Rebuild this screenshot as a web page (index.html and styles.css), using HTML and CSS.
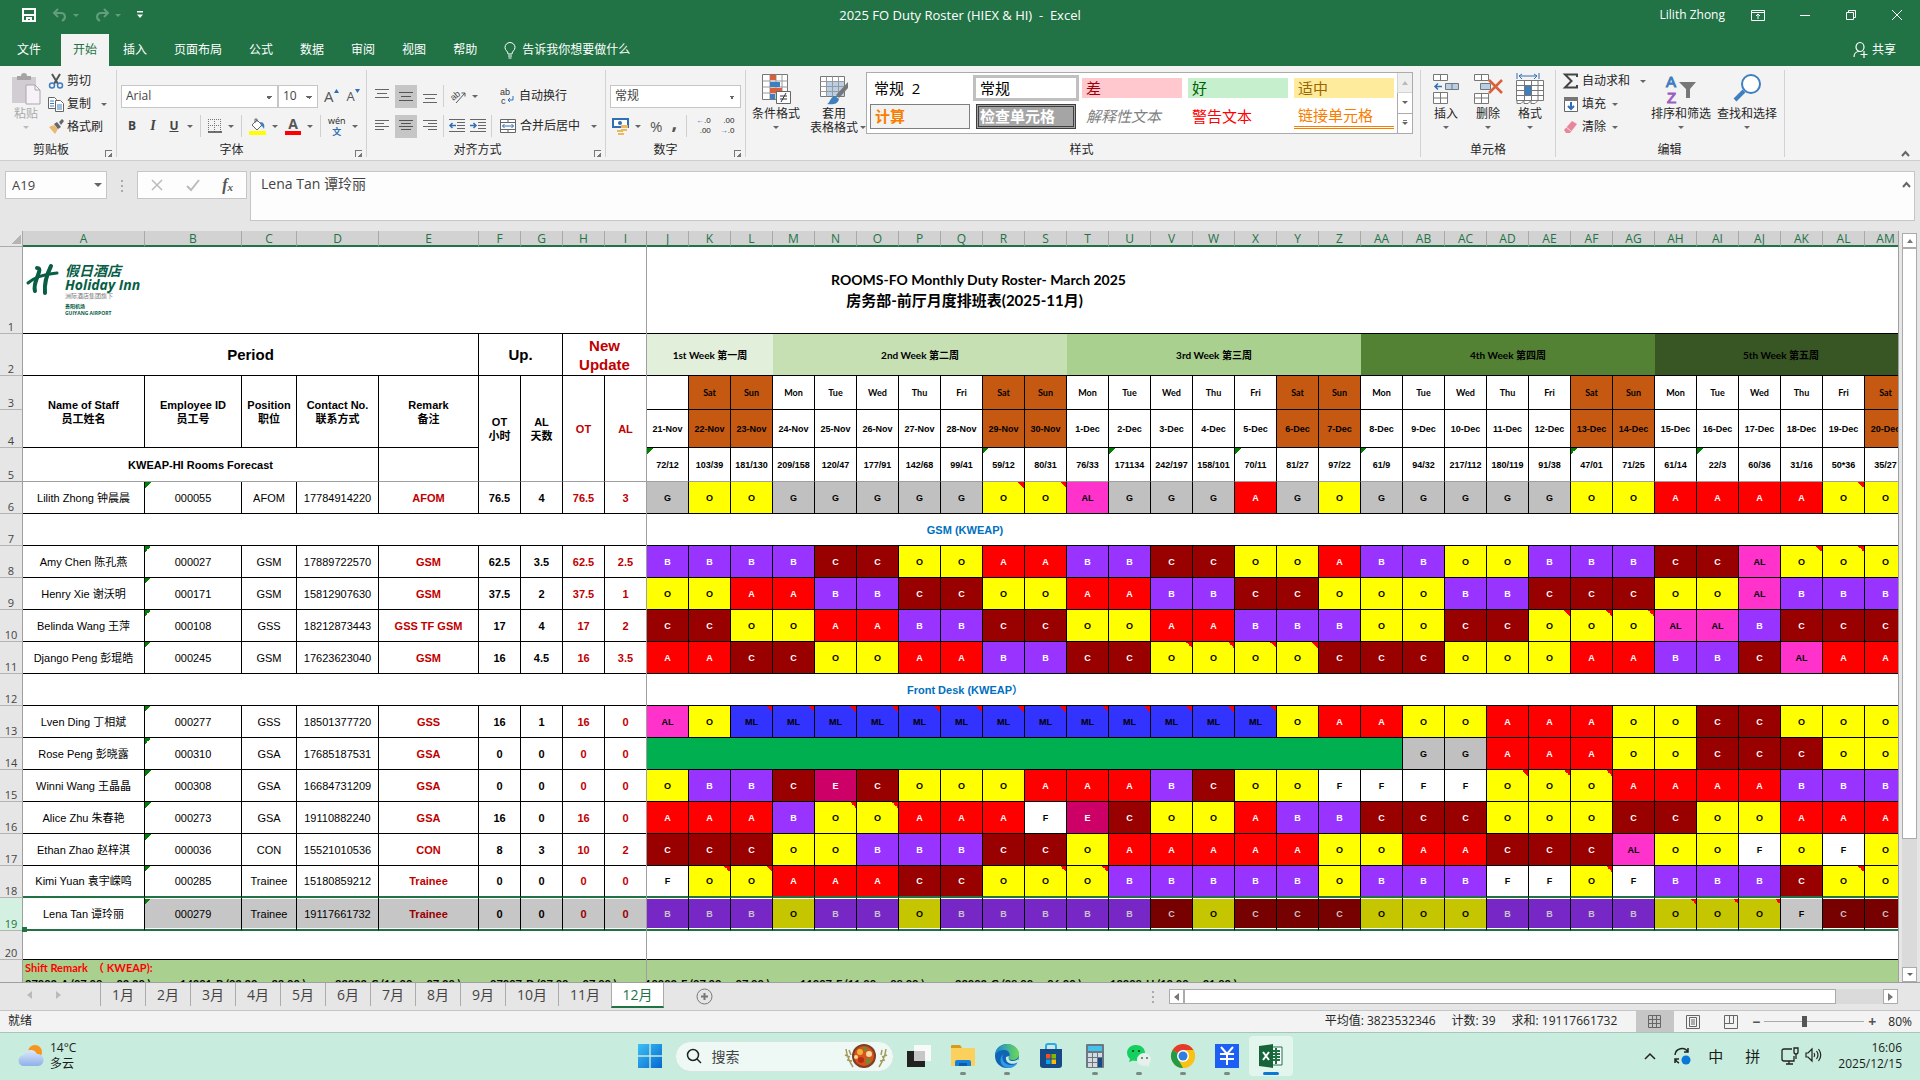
FILE: index.html
```html
<!DOCTYPE html>
<html lang="zh-CN">
    <head>
        <meta charset="utf-8">
        <title>2025 FO Duty Roster (HIEX &amp; HI) - Excel</title>
        <link rel="stylesheet" href="styles.css">
    </head>
    <body>
        <header class="titleBar">
            <div class="quick">
                <button aria-label="保存"><svg width="16" height="16" viewBox="0 0 16 16" fill="none" stroke="#fff" stroke-width="2"><path d="M2 2h12v12H2z"/><path d="M2 8h12M6 14v-3h4v3"/></svg></button>
                <button class="dim" aria-label="撤消"><svg width="16" height="16" viewBox="0 0 16 16" fill="none" stroke="#fff" stroke-width="2"><path d="M6 2L2 6l4 4M2 6h7c4 0 6 5 1 8"/></svg><i class="arrow"></i></button>
                <button class="dim" aria-label="恢复"><svg width="16" height="16" viewBox="0 0 16 16" fill="none" stroke="#fff" stroke-width="2"><path d="M10 2l4 4-4 4M14 6H7c-4 0-6 5-1 8"/></svg><i class="arrow"></i></button>
                <button aria-label="自定义"><svg width="8" height="8" viewBox="0 0 8 8"><path d="M1 0h6v1.500H1zM1 3.500h6L4 7z" fill="#fff"/></svg></button>
            </div>
            <h1>2025 FO Duty Roster (HIEX &amp; HI)&nbsp; -&nbsp; Excel</h1>
            <div class="winCtl">
                <span>Lilith Zhong</span>
                <button aria-label="功能区显示选项"><svg width="14" height="14" viewBox="0 0 14 14" fill="none" stroke="#fff"><path d="M.5 2.500h13v10H.5zM.5 4.500h13M7 11V6M5 8l2-2 2 2"/></svg></button>
                <button aria-label="最小化"><svg width="12" height="12" viewBox="0 0 12 12" stroke="#fff"><path d="M1 6.500h10"/></svg></button>
                <button aria-label="还原"><svg width="12" height="12" viewBox="0 0 12 12" fill="none" stroke="#fff"><path d="M1.500 3.500h7v7h-7zM3.500 3.500v-2h7v7h-2"/></svg></button>
                <button aria-label="关闭"><svg width="12" height="12" viewBox="0 0 12 12" stroke="#fff"><path d="M1 1l10 10M11 1L1 11"/></svg></button>
            </div>
        </header>
        <nav class="tabs">
            <button>文件</button>
            <button class="on">开始</button>
            <button>插入</button>
            <button>页面布局</button>
            <button>公式</button>
            <button>数据</button>
            <button>审阅</button>
            <button>视图</button>
            <button>帮助</button>
            <button class="tell"><svg width="12" height="17" viewBox="0 0 12 17" fill="none" stroke="#fff"><path d="M4 12c0-3-3-3.500-3-6.500a5 5 0 0 1 10 0C11 8.500 8 9 8 12zM4 14h4M4.500 16h3"/></svg>告诉我你想要做什么</button>
            <button class="share"><svg width="15" height="16" viewBox="0 0 15 16" fill="none" stroke="#fff" stroke-width="1.200"><ellipse cx="7" cy="5" rx="4" ry="4.500"/><path d="M1 15c0-3 2-5.500 5-5.500M11 9v7M7.500 12.500h7"/></svg>共享</button>
        </nav>

        <section class="ribbon">
            <div class="group gClip">
                <div class="tools">
                    <button class="big dimText"><svg width="30" height="32" viewBox="0 0 30 32"><path d="M1 4h24v26H1z" fill="#d2cdd2"/><path d="M6 7V3h4a3 3 0 0 1 6 0h4v4z" fill="#a6a2a6"/><path d="M15 12h9l5 5v14H15z" fill="#f6f2f8" stroke="#aaa6ac"/><path d="M24 12v5h5" fill="none" stroke="#aaa6ac"/></svg><span>粘贴</span><i class="arrow"></i></button>
                    <div class="stack">
                        <button><svg width="16" height="16" viewBox="0 0 16 16" fill="none"><path d="M4 1l6 10M12 1L6 11" stroke="#555" stroke-width="2"/><circle cx="4" cy="12.500" r="2.500" stroke="#3f7fbf" stroke-width="1.500"/><circle cx="12" cy="12.500" r="2.500" stroke="#3f7fbf" stroke-width="1.500"/></svg>剪切</button>
                        <button><svg width="16" height="16" viewBox="0 0 16 16" fill="#fff" stroke="#666"><path d="M.5 1.500h6l2 2v9h-8z"/><path d="M7.500 4.500h5l3 3v8h-8z"/><path d="M2 5h4M2 7.500h4M2 10h4M9 9h5M9 11h5M9 13h5" stroke="#3f7fbf"/></svg>复制<i class="arrow far"></i></button>
                        <button><svg width="16" height="16" viewBox="0 0 16 16"><path d="M1 8l5-2 4 4-3 5z" fill="#e9b872"/><path d="M6 5l3-2 4 5-3 2zM11 3l3-3 2 2-3 4z" fill="#666"/></svg>格式刷</button>
                    </div>
                </div>
                <h2>剪贴板</h2><i class="launch"></i>
            </div>
            <div class="group gFont">
                <div class="tools rows">
                    <div class="row">
                        <div class="joined"><select class="fontName" aria-label="字体"><option>Arial</option></select><select class="fontSize" aria-label="字号"><option>10</option></select></div>
                        <button class="grow" aria-label="增大字号">A<svg width="5" height="4" viewBox="0 0 5 4"><path d="M0 4l2.500-4L5 4z" fill="#2f6fb5"/></svg></button>
                        <button class="grow small" aria-label="减小字号">A<svg width="5" height="4" viewBox="0 0 5 4"><path d="M0 0h5L2.500 4z" fill="#2f6fb5"/></svg></button>
                    </div>
                    <div class="row fontRow">
                        <button class="bold">B</button><button class="italic">I</button><button class="under">U</button><i class="arrow"></i><i class="sep"></i>
                        <button aria-label="边框"><svg width="14" height="14" viewBox="0 0 14 14" fill="none" stroke="#777"><path d="M.5 0v13M6.500 0v13M12.500 0v13M0 .5h13M0 6.500h13" stroke-dasharray="1 1"/><path d="M0 13h14" stroke="#444" stroke-width="1.500"/></svg></button><i class="arrow"></i><i class="sep"></i>
                        <button aria-label="填充颜色"><svg width="17" height="17" viewBox="0 0 17 17"><path d="M3 7l5-5 5 5-5 5z" fill="#fff" stroke="#666"/><path d="M6 5V1h2v3" fill="none" stroke="#666"/><path d="M11 4c4 0 5 3 4 7-1-2-2-3-3-3z" fill="#3f7fbf"/><path d="M0 13h17v4H0z" fill="#ff0"/></svg></button><i class="arrow"></i>
                        <button class="fontColor" aria-label="字体颜色">A</button><i class="arrow"></i><i class="sep"></i>
                        <button class="wen"><span>wén</span><b>文</b></button><i class="arrow"></i>
                    </div>
                </div>
                <h2>字体</h2><i class="launch"></i>
            </div>
            <div class="group gAlign">
                <div class="tools rows">
                    <div class="row">
                        <button class="ic"><svg width="14" height="14" viewBox="0 0 14 14" stroke="#666"><path d="M0 .5h14M2 4.500h10M0 8.500h14"/></svg></button>
                        <button class="ic on"><svg width="14" height="14" viewBox="0 0 14 14" stroke="#555"><path d="M0 3.500h14M2 7.500h10M0 11.500h14"/></svg></button>
                        <button class="ic"><svg width="14" height="14" viewBox="0 0 14 14" stroke="#666"><path d="M0 5.500h14M2 9.500h10M0 13.500h14"/></svg></button>
                        <i class="sep"></i>
                        <button class="ic"><svg width="18" height="18" viewBox="0 0 18 18"><text x="2" y="12" font-size="9" fill="#444" transform="rotate(-40 6 10)">ab</text><path d="M7 16L16 6M12.500 6H16v3.500" fill="none" stroke="#555"/></svg></button><i class="arrow"></i>
                        <button class="wide wrapBtn"><svg width="16" height="18" viewBox="0 0 16 18"><text x="1" y="8" font-size="9" fill="#333">ab</text><text x="2" y="17" font-size="9" fill="#333">c</text><path d="M14 9v4H9M11 11l-2 2 2 2" fill="none" stroke="#2f6fb5"/></svg>自动换行</button>
                    </div>
                    <div class="row">
                        <button class="ic"><svg width="14" height="14" viewBox="0 0 14 14" stroke="#666"><path d="M0 1.500h14M0 4.500h9M0 7.500h14M0 10.500h9"/></svg></button>
                        <button class="ic on"><svg width="14" height="14" viewBox="0 0 14 14" stroke="#555"><path d="M0 1.500h14M2 4.500h10M0 7.500h14M2 10.500h10"/></svg></button>
                        <button class="ic"><svg width="14" height="14" viewBox="0 0 14 14" stroke="#666"><path d="M0 1.500h14M5 4.500h9M0 7.500h14M5 10.500h9"/></svg></button>
                        <i class="sep"></i>
                        <button class="ic"><svg width="16" height="14" viewBox="0 0 16 14" stroke="#666" fill="none"><path d="M0 .5h16M8 3.500h8M8 6.500h8M8 9.500h8M0 12.500h16"/><path d="M7 6.500H1M3.500 4L1 6.500 3.500 9" stroke="#2f6fb5" stroke-width="1.500"/></svg></button>
                        <button class="ic"><svg width="16" height="14" viewBox="0 0 16 14" stroke="#666" fill="none"><path d="M0 .5h16M8 3.500h8M8 6.500h8M8 9.500h8M0 12.500h16"/><path d="M0 6.500h6M3.500 4L6 6.500 3.500 9" stroke="#2f6fb5" stroke-width="1.500"/></svg></button>
                        <i class="sep"></i>
                        <button class="wide mergeBtn"><svg width="16" height="16" viewBox="0 0 16 16" fill="#fff" stroke="#666"><path d="M.5 1.500h15v13H.5zM.5 4.500h15M.5 11.500h15M8 1.500v3M8 11.500v3"/><path d="M2.500 8h11M4.500 6l-2 2 2 2M11.500 6l2 2-2 2" stroke="#2f6fb5" fill="none"/></svg>合并后居中</button><i class="arrow"></i>
                    </div>
                </div>
                <h2>对齐方式</h2><i class="launch"></i>
            </div>
            <div class="group gNum">
                <div class="tools rows">
                    <div class="row"><select class="numFmt" aria-label="数字格式"><option>常规</option></select></div>
                    <div class="row numRow">
                        <button><svg width="17" height="17" viewBox="0 0 17 17"><path d="M1 1h15v8H1z" fill="#fff" stroke="#2f6fb5" stroke-width="2"/><circle cx="8" cy="5" r="2" fill="#2f6fb5"/><path d="M9 7h7v3H9zM9 11h6v2H9zM5 12h6v2H5zM6 15h6v2H6z" fill="#e9b860"/></svg></button><i class="arrow"></i>
                        <button class="pct">%</button><button class="comma">,</button><i class="sep"></i>
                        <button class="dec"><span><b>←</b>.0</span><span>.00</span></button><button class="dec"><span>.00</span><span><b>→</b>.0</span></button>
                    </div>
                </div>
                <h2>数字</h2><i class="launch"></i>
            </div>
            <div class="group gStyle">
                <div class="tools">
                    <button class="big"><svg width="30" height="32" viewBox="0 0 30 32"><path d="M1.500 1.500h25v25h-25z" fill="#fff" stroke="#777"/><path d="M1.500 8h25M1.500 14h25M1.500 20h25M9 1.500v25M15 1.500v25M21 1.500v25" stroke="#999"/><path d="M9 2h6v5H9zM9 15h12v5H9z" fill="#d9603b"/><path d="M9 9h10v5H9zM9 21h5v5H9z" fill="#3f7fbf"/><path d="M15.500 18.500h14v12h-14z" fill="#fff" stroke="#666"/><path d="M19 23h7M19 26h7M25 20l-5 9" stroke="#333"/></svg><span>条件格式</span><i class="arrow"></i></button>
                    <button class="big"><svg width="30" height="32" viewBox="0 0 30 32"><path d="M1.500 3.500h24v20h-24z" fill="#fff" stroke="#777"/><path d="M7 9h18v14H7z" fill="#b8cfe8"/><path d="M1.500 8.500h24M1.500 13.500h24M1.500 18.500h24M7.500 3.500v20M13.500 3.500v20M19.500 3.500v20" stroke="#999"/><path d="M29 9v6l-9 10-3-3z" fill="#777"/><path d="M8 31c3-1 3-7 8-8l4 3c-1 5-6 6-12 5z" fill="#3f7fbf"/></svg><span>套用</span><span>表格格式<i class="arrow"></i></span></button>
                    <div class="gallery">
                        <div class="swatches">
                            <button class="s1">常规 &nbsp;2</button><button class="s2">常规</button><button class="s3">差</button><button class="s4">好</button><button class="s5">适中</button>
                            <button class="s6">计算</button><button class="s7">检查单元格</button><button class="s8">解释性文本</button><button class="s9">警告文本</button><button class="s10">链接单元格</button>
                        </div>
                        <div class="galBar"><button class="off"><i class="arrow up"></i></button><button><i class="arrow"></i></button><button><i class="arrow more"></i></button></div>
                    </div>
                </div>
                <h2>样式</h2>
            </div>
            <div class="group gCells">
                <div class="tools">
                    <button class="big"><svg width="28" height="32" viewBox="0 0 28 32" fill="#fff" stroke="#777"><path d="M1.500 1.500h14v6h-14zM8.500 1.500v6M1.500 19.500h14v11h-14zM8.500 19.500v11M1.500 25h14"/><path d="M13.500 10.500h13v6h-13zM20 10.500v6" fill="#b8cfe8"/><path d="M10 13.500H3M6 10.500l-3 3 3 3" fill="none" stroke="#2f6fb5" stroke-width="1.500"/></svg><span>插入</span><i class="arrow"></i></button>
                    <button class="big"><svg width="30" height="32" viewBox="0 0 30 32" fill="#fff" stroke="#777"><path d="M1.500 1.500h14v6h-14zM8.500 1.500v6M1.500 20.500h14v10h-14zM8.500 20.500v10M1.500 25h14"/><path d="M7.500 10.500h10v6h-10z" fill="#b8cfe8"/><path d="M16 7l13 13M29 7L16 20" stroke="#d9603b" stroke-width="2.500"/></svg><span>删除</span><i class="arrow"></i></button>
                    <button class="big"><svg width="28" height="32" viewBox="0 0 28 32" fill="#fff" stroke="#777"><path d="M.5 7.500h27v20H.500zM.5 12.500h27M.5 17.500h27M.5 22.500h27M8.500 7.500v20M15.500 7.500v20M22 7.500v20M1 27.500v3h4l3-3v3h4l3-3v3h4l3-3"/><path d="M8.500 12.500h7v10h-7z" fill="#3f7fbf"/><path d="M1 0v6M23 0v6M3 3h18M6 1L3 3l3 3M18 1l3 2-3 3" stroke="#2f6fb5" fill="none"/></svg><span>格式</span><i class="arrow"></i></button>
                </div>
                <h2>单元格</h2>
            </div>
            <div class="group gEdit">
                <div class="tools">
                    <div class="stack">
                        <button><svg width="16" height="16" viewBox="0 0 16 16"><path d="M14 4V1.500H2L8.500 8 2 14.500h12V12" fill="none" stroke="#444" stroke-width="2"/></svg>自动求和<i class="arrow far"></i></button>
                        <button><svg width="16" height="16" viewBox="0 0 16 16"><path d="M1.500 1.500h13v14h-13z" fill="#fff" stroke="#666"/><path d="M1 1h14v4H1z" fill="#777"/><path d="M8 6v7M5 10l3 3 3-3" stroke="#2f6fb5" stroke-width="2" fill="none"/></svg>填充<i class="arrow"></i></button>
                        <button><svg width="16" height="16" viewBox="0 0 16 16"><path d="M1 11l8-9 5 3-7 9H3z" fill="#e8869b"/><path d="M3 8l5 4" stroke="#f7dce2"/></svg>清除<i class="arrow"></i></button>
                    </div>
                    <button class="big"><svg width="30" height="32" viewBox="0 0 30 32"><text x="0" y="14" font-size="15" fill="#3f7fbf" stroke="#3f7fbf">A</text><text x="1" y="30" font-size="15" fill="#9b5fc0" stroke="#9b5fc0">Z</text><path d="M13 9h17l-6 7v9h-4v-9z" fill="#777"/></svg><span>排序和筛选</span><i class="arrow"></i></button>
                    <button class="big"><svg width="30" height="32" viewBox="0 0 30 32" fill="none"><circle cx="19" cy="11" r="9" fill="#fff" stroke="#3f7fbf" stroke-width="2"/><path d="M12 18L3 27" stroke="#3f7fbf" stroke-width="4"/></svg><span>查找和选择</span><i class="arrow"></i></button>
                </div>
                <h2>编辑</h2>
            </div>
            <button class="collapse" aria-label="折叠功能区"><svg width="9" height="6" viewBox="0 0 9 6" fill="none" stroke="#666" stroke-width="2"><path d="M1 5l3.500-4L8 5"/></svg></button>
        </section>

        <section class="formula">
            <div class="nameBox"><input aria-label="名称框" value="A19"><i class="arrow"></i></div>
            <i class="dots"></i>
            <div class="fxBox">
                <svg width="12" height="12" viewBox="0 0 12 12" stroke="#bbb" stroke-width="1.500"><path d="M1 1l10 10M11 1L1 11"/></svg>
                <svg width="14" height="12" viewBox="0 0 14 12" stroke="#bbb" stroke-width="2" fill="none"><path d="M1 7l4 4 8-10"/></svg>
                <button>f<small>x</small></button>
            </div>
            <div class="fText">
                <textarea aria-label="编辑栏">Lena Tan 谭玲丽</textarea>
                <svg width="9" height="6" viewBox="0 0 9 6" fill="none" stroke="#666" stroke-width="2"><path d="M1 5l3.500-4L8 5"/></svg>
            </div>
        </section>

        <main class="work">
            <div class="pane">
                <table class="sheet">
                    <colgroup id="cols"></colgroup>
                    <thead><tr id="letters"><th class="corner"></th></tr></thead>
                    <tbody id="cells"></tbody>
                </table>
                <i class="freeze"></i>
                <i class="handle"></i>
            </div>
            <div class="vBar"><button><i class="arrow up"></i></button><i class="thumb"></i><i class="track"></i><button><i class="arrow"></i></button></div>
        </main>

        <nav class="sheetTabs">
            <span class="tabNav"><i class="tri left"></i><i class="tri right"></i></span>
            <button>1月</button><button>2月</button><button>3月</button><button>4月</button><button>5月</button><button>6月</button><button>7月</button><button>8月</button><button>9月</button><button class="two">10月</button><button class="two">11月</button><button class="two on">12月</button>
            <button class="add" aria-label="新工作表"><svg width="17" height="17" viewBox="0 0 17 17" fill="none" stroke="#777"><circle cx="8.500" cy="8.500" r="7.500"/><path d="M8.500 5v7M5 8.500h7" stroke-width="2"/></svg></button>
            <i class="dots"></i>
            <div class="hBar"><button><i class="tri left"></i></button><i class="thumb"></i><i class="track"></i><button><i class="tri right"></i></button></div>
        </nav>

        <footer class="status">
            <span class="ready">就绪</span>
            <span>平均值: 3823532346</span>
            <span>计数: 39</span>
            <span>求和: 19117661732</span>
            <div class="views">
                <button class="on"><svg width="14" height="14" viewBox="0 0 14 14" fill="none" stroke="#666"><path d="M.5 .5h12v12H.5zM.5 4.500h12M.5 8.500h12M4.500 .5v12M8.500 .5v12"/></svg></button>
                <button><svg width="14" height="14" viewBox="0 0 14 14" fill="none" stroke="#666"><path d="M.5 .5h13v13H.5zM3.500 2.500h7v9h-7zM5 5h4M5 7h4M5 9h4"/></svg></button>
                <button><svg width="14" height="14" viewBox="0 0 14 14" fill="none" stroke="#666"><path d="M.5 .5h13v13H.5zM.5 8.500h9V.5M5.500 .5v8"/></svg></button>
            </div>
            <div class="zoom"><button>−</button><input type="range" min="10" max="150" value="65" aria-label="缩放"><button>+</button><span>80%</span></div>
        </footer>

        <div class="taskbar">
            <div class="weather">
                <svg width="26" height="24" viewBox="0 0 26 24"><defs><linearGradient id="cl" x2="0" y2="1"><stop stop-color="#dce9fb"/><stop offset="1" stop-color="#8fb0ea"/></linearGradient></defs><circle cx="17" cy="8" r="7" fill="#f7961d"/><path d="M6 22a5.500 5.500 0 0 1 0-11 7 7 0 0 1 13-1 6 6 0 0 1 1 12z" fill="url(#cl)"/></svg>
                <p>14°C<br>多云</p>
            </div>
            <div class="apps">
                <button class="app" aria-label="开始"><svg width="24" height="24" viewBox="0 0 24 24"><defs><linearGradient id="wn" x2="1" y2="1"><stop stop-color="#3cc0f5"/><stop offset="1" stop-color="#0667cf"/></linearGradient></defs><path d="M0 0h11.300v11.300H0zM12.700 0H24v11.300H12.700zM0 12.700h11.300V24H0zM12.700 12.700H24V24H12.700z" fill="url(#wn)"/></svg></button>
                <label class="search"><svg width="16" height="16" viewBox="0 0 16 16" fill="none" stroke="#222" stroke-width="1.500"><circle cx="7" cy="7" r="5.500"/><path d="M11 11l4 4"/></svg><input placeholder="搜索" aria-label="搜索"><svg width="46" height="26" viewBox="0 0 46 26"><path d="M3 6c1 8 3 12 7 18M43 6c-1 8-3 12-7 18M2 12l5 2M6 7l2 5M4 17l5 1M44 12l-5 2M39 7l-1 5M42 17l-5 1" stroke="#a39a5c" stroke-width="1.500" fill="none"/><circle cx="21" cy="13" r="12" fill="#7c3f22"/><circle cx="21" cy="13" r="10" fill="#d9531e"/><circle cx="17" cy="9" r="3" fill="#f2b233"/><circle cx="26" cy="11" r="3" fill="#f4d9a0"/><circle cx="18" cy="17" r="3" fill="#b52c12"/><circle cx="25" cy="18" r="2.500" fill="#5d9438"/><circle cx="22" cy="6" r="2" fill="#5d9438"/><circle cx="13" cy="14" r="2" fill="#f4d9a0"/></svg></label>
                <button class="app" aria-label="任务视图"><svg width="26" height="24" viewBox="0 0 26 24"><path d="M8 1h17v16H8z" fill="#f7faf9"/><path d="M1 7h18v16H1z" fill="#222"/><path d="M8 7h11v10H8z" fill="#c5c8c7"/></svg></button>
                <button class="app run" aria-label="文件资源管理器"><svg width="26" height="24" viewBox="0 0 26 24"><path d="M1 2q0-1 1-1h8l2 3h-11z" fill="#d99a16"/><path d="M1 4h23q1 0 1 1v17H1z" fill="#fcd05c"/><path d="M5 22v-4q0-2 2-2h12q2 0 2 2v4z" fill="#1681d8"/><path d="M9 19h8v3H9z" fill="#0a5ca8"/></svg></button>
                <button class="app run" aria-label="Edge"><svg width="26" height="26" viewBox="0 0 26 26"><defs><linearGradient id="ed" x2="1"><stop stop-color="#1583d8"/><stop offset="1" stop-color="#6ddb55"/></linearGradient></defs><circle cx="13" cy="13" r="12" fill="#0f64b5"/><path d="M1 13C1 5 7 1 13 1c7 0 12 5 12 10 0 4-3 6-7 6-3 0-4-1-3-3 2-4-1-7-5-7s-8 2-9 6z" fill="url(#ed)"/><path d="M9 11c-2 5 1 11 8 11 3 0 5-1 7-3-3 6-9 7-13 5-5-2-6-9-2-13z" fill="#3199e8"/><path d="M15 13c-1 3 0 5 4 5 2 0 4-1 5-2v3c-6 4-13 1-12-5z" fill="#c9ecdf"/></svg></button>
                <button class="app" aria-label="应用商店"><svg width="24" height="26" viewBox="0 0 24 26"><path d="M7 7V3q0-2 2-2h6q2 0 2 2v4" fill="none" stroke="#2fa8e8" stroke-width="2"/><path d="M1 6h22v16q0 3-3 3H4q-3 0-3-3z" fill="#164a86"/><path d="M7 11h4.500v4.500H7z" fill="#f25022"/><path d="M12.500 11H17v4.500h-4.500z" fill="#7fba00"/><path d="M7 16.500h4.500V21H7z" fill="#00a4ef"/><path d="M12.500 16.500H17V21h-4.500z" fill="#ffb900"/></svg></button>
                <button class="app run" aria-label="计算器"><svg width="20" height="26" viewBox="0 0 20 26"><rect x="1" y="1" width="18" height="24" rx="1" fill="#6c7881"/><path d="M3 3h14v5H3z" fill="#42c3ee"/><path d="M3 10h4v4H3zM8 10h4v4H8zM13 10h4v4h-4zM3 15h4v4H3zM8 15h4v4H8zM3 20h4v4H3zM8 20h4v4H8z" fill="#d5dade"/><path d="M13 15h4v9h-4z" fill="#164a86"/></svg></button>
                <button class="app run" aria-label="微信"><svg width="26" height="24" viewBox="0 0 26 24"><path d="M10 1c5 0 9 3 9 8s-4 8-9 8l-3-.5L3 18l1-3C-2 9 2 1 10 1z" fill="#14d15f"/><path d="M18 9c4 0 7 3 7 6 0 2-1 4-2 5v3l-3-1.500c-5 1-9-2-9-6 0-3 3-6.500 7-6.500z" fill="#e7f1ec"/><path d="M6 6h2v2H6zM12 6h2v2h-2z" fill="#075c2c"/><path d="M15 13h2v2h-2zM20 13h2v2h-2z" fill="#7d8a84"/></svg></button>
                <button class="app run" aria-label="Chrome"><svg width="26" height="26" viewBox="0 0 26 26"><circle cx="13" cy="13" r="12" fill="#fbc116"/><path d="M13 13L2.600 7A12 12 0 0 1 23.400 7z" fill="#e33b2e"/><path d="M13 13v12A12 12 0 0 1 2.600 7z" fill="#229a48"/><path d="M23.400 7H13v6l-5 3 5 9A12 12 0 0 0 23.400 7z" fill="#fbc116"/><circle cx="13" cy="13" r="6" fill="#fff"/><circle cx="13" cy="13" r="4.500" fill="#2f7de1"/></svg></button>
                <button class="app run" aria-label="财务"><svg width="24" height="24" viewBox="0 0 24 24"><path d="M0 0h24v24H0z" fill="#1d5ff5"/><path d="M6 3l6 7 6-7M12 10v11M5 10h14M5 15h14" stroke="#fff" stroke-width="2" fill="none"/></svg></button>
                <button class="app run active" aria-label="Excel"><svg width="24" height="24" viewBox="0 0 24 24"><path d="M10 3h13v18H10z" fill="#fff" stroke="#1f7145"/><path d="M12 7h9M12 10h9M12 13h9M12 16h9M17 4v16" stroke="#1f7145" stroke-width="2"/><path d="M0 2l14-2v24L0 22z" fill="#16653a"/><path d="M4 8l6 8M10 8l-6 8" stroke="#fff" stroke-width="2"/></svg></button>
            </div>
            <div class="tray">
                <svg width="12" height="8" viewBox="0 0 12 8" fill="none" stroke="#222" stroke-width="1.500"><path d="M1 7l5-5 5 5"/></svg>
                <svg width="18" height="18" viewBox="0 0 18 18" fill="none" stroke="#222" stroke-width="1.500"><path d="M2 8a7 7 0 0 1 13-3M15 1v4h-4M2 16v-4h4M2 12c1 2 2 3 4 4"/><circle cx="13" cy="13" r="4.500" fill="#0a78d6" stroke="none"/></svg>
                <span class="lang">中</span><span>拼</span>
                <div class="pair"><svg width="18" height="18" viewBox="0 0 18 18" fill="none" stroke="#222" stroke-width="1.300"><path d="M11 2H3q-2 0-2 2v8q0 2 2 2h10V9M5 17h7M8 14v3M13 1h4v4q0 2-2 2t-2-2zM15 7v5"/></svg>
                <svg width="17" height="16" viewBox="0 0 17 16" fill="none" stroke="#222" stroke-width="1.200"><path d="M1 6h2l4-4v12L3 10H1zM9 6q1.500 2 0 4M11.500 4q3 4 0 8M13.500 2q4.500 6 0 12"/></svg></div>
                <p>16:06<br>2025/12/15</p>
            </div>
        </div>
        <script src="script.js"></script>
    </body>
</html>
```
FILE: styles.css
```css
* {
    box-sizing: border-box;
}

body {
    margin: 0;
    height: 100vh;
    display: flex;
    flex-direction: column;
    overflow: hidden;
    background-color: #e6e6e6;
    color: #262626;
    font-family: "Open Sans", "Noto Sans CJK SC", sans-serif;
    font-size: 12px;
    line-height: 14px;
}

button {
    font: inherit;
    color: inherit;
    border: 0;
    padding: 0;
    background: none;
    display: flex;
    align-items: center;
    justify-content: center;
    white-space: nowrap;
    flex-shrink: 0;
}

svg {
    flex-shrink: 0;
    overflow: visible;
}

svg text {
    font-family: "Liberation Sans", sans-serif;
}

i {
    flex-shrink: 0;
}

input, select, textarea {
    font: inherit;
    color: #444;
    border: 0;
    background: none;
    outline: none;
}

.arrow {
    display: inline-block;
    border: 3px solid transparent;
    border-top-color: #666;
    border-bottom: 0;
}

.arrow.up {
    border-top: 0;
    border-bottom: 4px solid #777;
}

.sep {
    width: 1px;
    height: 22px;
    background-color: #d0d0d0;
}

.dots {
    width: 2px;
    height: 12px;
    background: repeating-linear-gradient(#aaa 0 2px, transparent 2px 5px);
}

/* title bar and tabs */
.titleBar, .tabs {
    background-color: #217346;
    color: #fff;
    display: flex;
    align-items: center;
    flex-shrink: 0;
}

.titleBar {
    height: 34px;
    padding-bottom: 4px;
    justify-content: space-between;
}

.titleBar h1 {
    margin: 0;
    font-size: 13px;
    font-weight: normal;
}

.quick {
    display: flex;
    gap: 15px;
    width: 800px;
    padding-left: 21px;
}

.quick .arrow {
    border-top-color: #fff;
    margin-left: 5px;
}

.dim {
    opacity: 0.3;
}

.winCtl {
    display: flex;
    justify-content: flex-end;
    gap: 34px;
    width: 800px;
    padding-right: 17px;
}

.winCtl span {
    margin-right: -8px;
}

.tabs {
    height: 32px;
    align-items: stretch;
    padding-left: 3px;
}

.tabs button {
    padding: 0 13px 0 14px;
}

.tabs .on {
    background-color: #f3f3f3;
    color: #217346;
    margin: 0 0 0 7px;
    padding: 0 12px;
}

.tabs .tell {
    gap: 6px;
}

.tabs .share {
    margin-left: auto;
    padding-right: 24px;
    gap: 4px;
}

/* ribbon */
.ribbon {
    display: flex;
    height: 95px;
    flex-shrink: 0;
    background-color: #f3f3f3;
    border-bottom: 1px solid #cfcfcf;
    padding: 4px 10px 3px 0;
}

.group {
    display: flex;
    flex-direction: column;
    justify-content: space-between;
    border-right: 1px solid #d2d2d2;
    position: relative;
    flex-shrink: 0;
}

.group h2 {
    margin: 0;
    padding-right: 8px;
    font-size: 12px;
    font-weight: normal;
    text-align: center;
}

.group h2:not(:last-child) {
    padding-right: 24px;
}

.launch {
    position: absolute;
    right: 4px;
    bottom: 0;
    width: 7px;
    height: 7px;
    border-top: 1px solid #777;
    border-left: 1px solid #777;
    background: linear-gradient(135deg, transparent 60%, #777 60%);
}

.gClip { width: 117px; padding-left: 10px; }
.gFont { width: 250px; padding-left: 4px; }
.gAlign { width: 239px; padding-left: 7px; }
.gNum { width: 140px; padding-left: 4px; }
.gStyle { width: 675px; padding-left: 5px; }
.gCells { width: 135px; padding-left: 8px; }
.gEdit { width: 229px; padding-left: 7px; }

.tools {
    display: flex;
    gap: 6px;
    height: 68px;
}

.big {
    flex-direction: column;
    justify-content: flex-start;
    width: 34px;
    padding-top: 3px;
}

.big span {
    line-height: 14px;
}

.big span:first-of-type {
    margin-top: 2px;
}

.big > .arrow {
    margin-top: 5px;
}

.big .arrow {
    vertical-align: 3px;
}

.big span .arrow {
    margin: 0 -8px 0 2px;
}

.dimText {
    width: 32px;
    color: #aaa;
}

.dimText .arrow {
    border-top-color: #bbb;
}

.gCells .tools {
    gap: 8px;
}

.gStyle .tools {
    gap: 8px;
}

.gStyle .big {
    width: 50px;
}

.gEdit .tools {
    gap: 4px;
}

.gEdit .big {
    width: 62px;
}

.stack {
    display: flex;
    flex-direction: column;
    justify-content: space-between;
}

.stack button {
    height: 22px;
    gap: 3px;
    justify-content: flex-start;
}

.stack .arrow {
    margin-left: 3px;
}

.stack .arrow.far {
    margin-left: 7px;
}

.rows {
    flex-direction: column;
    justify-content: flex-end;
    gap: 6px;
}

.row {
    display: flex;
    align-items: center;
    height: 24px;
    gap: 6px;
}

.rows select {
    appearance: none;
    height: 23px;
    padding: 0 4px;
    border: 1px solid #c6c6c6;
    background:
        conic-gradient(from -45deg at 50% 100%, #666 90deg, transparent 90deg) calc(100% - 5px) 10px / 6px 3px no-repeat,
        #fff;
}

.joined {
    display: flex;
}

.fontName { width: 157px; }
.fontSize { width: 40px; }
.numFmt { width: 131px; }

.grow {
    font-size: 15px;
    color: #555;
    align-items: flex-start;
}

.grow.small {
    font-size: 13px;
    margin-left: 2px;
}

.fontRow {
    gap: 7px;
    padding-left: 4px;
}

.fontRow .arrow {
    margin-left: -1px;
}

.bold, .italic, .under {
    width: 14px;
    font-weight: bold;
    color: #444;
}

.italic {
    font-style: italic;
    font-family: "Liberation Serif", serif;
    font-size: 14px;
}

.under {
    text-decoration: underline;
}

.fontColor {
    width: 16px;
    height: 17px;
    font-size: 14px;
    font-weight: bold;
    color: #555;
    line-height: 12px;
    border-bottom: 4px solid #f00;
}

.wen {
    flex-direction: column;
    font-size: 9px;
    line-height: 11px;
}

.wen b {
    color: #2f6fb5;
}

.ic {
    min-width: 16px;
    height: 23px;
}

.gAlign .row {
    gap: 5px;
}

.ic.on {
    width: 22px;
    background-color: #c6c6c6;
}

.wide {
    gap: 4px;
}

.gAlign .wide + .arrow {
    margin-left: 6px;
}

.wrapBtn {
    margin-left: 16px;
}

.mergeBtn {
    margin-left: 3px;
}

.numRow {
    gap: 9px;
    padding-left: 2px;
}

.numRow .arrow {
    margin-left: -3px;
}

.pct {
    font-size: 15px;
    color: #555;
}

.comma {
    font-size: 20px;
    font-weight: bold;
    padding-bottom: 8px;
    color: #555;
}

.dec {
    flex-direction: column;
    align-items: flex-end;
    font-family: "Liberation Sans", sans-serif;
    font-size: 8px;
    line-height: 10px;
}

.dec b {
    color: #2f6fb5;
}

.gallery {
    display: flex;
    width: 547px;
    height: 62px;
    margin: 2px 0 0 -1px;
    border: 1px solid #ababab;
    background-color: #fff;
}

.swatches {
    display: grid;
    flex: 1;
    grid-template-columns: repeat(5, 1fr);
    gap: 6px;
    padding: 5px 3px 4px;
}

.swatches button {
    justify-content: flex-start;
    padding-left: 4px;
    font-size: 15px;
    color: #000;
}

.swatches .s2 { outline: 3px solid #c0c0c0; }
.swatches .s3 { background-color: #ffc7ce; color: #9c0006; }
.swatches .s4 { background-color: #c6efce; color: #006100; }
.swatches .s5 { background-color: #ffeb9c; color: #9c6500; }
.swatches .s6 { background-color: #f2f2f2; color: #fa7d00; border: 1px solid #7f7f7f; font-weight: bold; }
.swatches .s7 { background-color: #a5a5a5; color: #fff; border: 3px double #3f3f3f; font-weight: bold; padding-left: 1px; }
.swatches .s8 { color: #7f7f7f; font-style: italic; }
.swatches .s9 { color: #f00; }
.swatches .s10 { color: #fa7d00; border-bottom: 3px double #fa7d00; }

.galBar {
    display: flex;
    flex-direction: column;
    width: 15px;
}

.galBar button {
    flex: 1;
    border-left: 1px solid #ababab;
    border-bottom: 1px solid #ababab;
}

.galBar button:last-child {
    border-bottom: 0;
}

.galBar .off {
    background-color: #e1e1e1;
    opacity: 0.5;
}

.galBar .more {
    box-shadow: 0 -3px 0 -1px #777;
}

.collapse {
    margin-left: auto;
    align-self: flex-end;
}

/* formula bar */
.formula {
    display: flex;
    align-items: flex-start;
    height: 70px;
    padding: 10px 5px 10px 5px;
    flex-shrink: 0;
    font-size: 13px;
}

.nameBox, .fxBox {
    display: flex;
    align-items: center;
    height: 28px;
    border: 1px solid #c6c6c6;
    background-color: #fdfdfd;
}

.nameBox {
    width: 102px;
    padding: 0 6px 0 0;
}

.nameBox input {
    width: 88px;
    padding-left: 6px;
}

.nameBox .arrow {
    border-width: 4px 4px 0;
}

.formula > .dots {
    margin: 9px 14px 0 14px;
}

.fxBox {
    width: 110px;
    justify-content: space-between;
    padding: 0 13px;
}

.fxBox button {
    font-family: "Liberation Serif", serif;
    font-style: italic;
    font-weight: bold;
    font-size: 16px;
    color: #555;
}

.fxBox small {
    font-size: 11px;
    padding-top: 4px;
}

.fText {
    flex: 1;
    display: flex;
    height: 50px;
    margin-left: 3px;
    border: 1px solid #c6c6c6;
    background-color: #fdfdfd;
}

.fText textarea {
    flex: 1;
    resize: none;
    padding: 3px 10px;
    font-size: 14px;
    line-height: 18px;
}

.fText svg {
    margin: 10px 3px;
}

/* worksheet */
.work {
    flex: 1;
    min-height: 0;
    display: flex;
}

.pane {
    flex: 1;
    min-width: 0;
    overflow: hidden;
    position: relative;
    border-right: 1px solid #9f9f9f;
}

.sheet {
    table-layout: fixed;
    width: 1907px;
    border-spacing: 0;
    background-color: #fff;
    color: #000;
    font-family: "Liberation Sans", "Noto Sans CJK SC", sans-serif;
    font-size: 11px;
    line-height: 14px;
    text-align: center;
}

.sheet col { width: 42px; }
.sheet .cHead { width: 23px; }
.sheet .cA { width: 122px; }
.sheet .cB { width: 97px; }
.sheet .cC { width: 55px; }
.sheet .cD { width: 82px; }
.sheet .cE { width: 100px; }

.sheet td {
    padding: 0;
    border-right: 1px solid #000;
    border-bottom: 1px solid #000;
    overflow: hidden;
    white-space: nowrap;
}

.sheet thead th {
    height: 16px;
    padding: 1px 0 0;
    background-color: #d2d2d2;
    border-right: 1px solid #a8a8a8;
    border-bottom: 2px solid #217346;
    color: #217346;
    font-family: "Open Sans", sans-serif;
    font-size: 12px;
    font-weight: normal;
    line-height: 13px;
}

.sheet thead .corner {
    border-bottom: 1px solid #ababab;
    background: linear-gradient(135deg, transparent 50%, #b4b4b4 50%) 12px 4px / 9px 9px no-repeat #e6e6e6;
}

.sheet tbody th {
    padding: 0;
    vertical-align: bottom;
    background-color: #e6e6e6;
    border-right: 1px solid #9f9f9f;
    border-bottom: 1px solid #b4b4b4;
    color: #444;
    font-family: "Open Sans", sans-serif;
    font-weight: normal;
    line-height: 12px;
}

.sheet tr { height: 32px; }
.sheet thead tr { height: 16px; }
.sheet .r1 { height: 87px; }
.sheet .r2 { height: 42px; }
.sheet .r3, .sheet .r5 { height: 34px; }
.sheet .r4 { height: 38px; }
.sheet .r19 { height: 33px; }
.sheet .r20 { height: 29px; }
.sheet .r21 { height: 60px; }

.sheet .banner {
    position: relative;
    font-family: Lato, "Noto Sans CJK SC", sans-serif;
    font-size: 15px;
    font-weight: bold;
    line-height: 20px;
}

.banner .first {
    padding-left: 28px;
    font-size: 14px;
}

.logo {
    position: absolute;
    left: 4px;
    top: 17px;
    display: flex;
    gap: 6px;
    text-align: left;
    color: #075e45;
    line-height: 14px;
}

.logo p {
    margin: 0;
    font-size: 14px;
    font-weight: bold;
    font-style: italic;
    font-family: "Open Sans", "Noto Sans CJK SC", sans-serif;
}

.logo small {
    display: block;
    font-size: 5px;
    line-height: 7px;
    font-style: normal;
}

.logo .group1 {
    font-size: 6px;
    font-weight: normal;
    color: #777;
    padding: 1px 0 3px;
}

.big1 { font-size: 15px; font-weight: bold; line-height: 19px; }
.head { font-weight: bold; }
.red { color: #c00000; font-weight: bold; }
.num { font-weight: bold; }

.sheet .week {
    font-family: Lato, "Noto Sans CJK SC", sans-serif;
    font-size: 10px;
    font-weight: bold;
    border-right: 0;
}

.w1 { background-color: #e2efda; }
.w2 { background-color: #c6e0b4; }
.w3 { background-color: #a9d08e; }
.w4 { background-color: #548235; }
.w5 { background-color: #375623; }

.sheet .day, .sheet .date, .sheet .fore, .sheet .code {
    font-size: 9px;
    font-weight: bold;
}

.sheet .day {
    font-family: Lato, sans-serif;
}

.weekend { background-color: #c65911; }

.sheet .r5 td, .sheet .r5 th, .sheet .frozen {
    border-bottom-color: #9f9f9f;
}

.sheet .section {
    color: #0070c0;
    font-weight: bold;
    border-right: 0;
}

.green { background-color: #00b050; }

.G { background-color: #c0c0c0; }
.O { background-color: #ffff00; }
.A { background-color: #ff0000; color: #fff; }
.B { background-color: #9933ff; color: #fff; }
.C { background-color: #990000; color: #fff; }
.E { background-color: #cc0066; color: #fff; }
.AL { background-color: #ff33cc; }
.ML { background-color: #3333ff; }

.note {
    background-image: linear-gradient(45deg, transparent 50%, #f00 50%);
    background-position: top right;
    background-size: 6px 6px;
    background-repeat: no-repeat;
}

.warn {
    background-image: linear-gradient(135deg, #008000 50%, transparent 50%);
    background-size: 6px 6px;
    background-repeat: no-repeat;
}

/* selected row */
.sheet .r18 td {
    border-bottom: 2px solid #217346;
}

.sheet .r19 th {
    background-color: #d3f0e0;
    color: #217346;
}

.sheet .r19 td {
    background-color: #c6c6c6;
    border-bottom: 2px solid #217346;
    box-shadow: inset 0 1px #fff, inset 0 -1px #fff;
}

.sheet .r19 .name { background-color: #fff; }
.sheet .r19 .red { color: #980000; }
.sheet .r19 .O { background-color: #c6c600; }
.sheet .r19 .B { background-color: #7727c6; color: #c6c6c6; }
.sheet .r19 .C { background-color: #770000; color: #c6c6c6; }

.sheet .remark {
    background-color: #a9d08e;
    vertical-align: top;
    text-align: left;
    padding: 0 2px;
    font-family: Lato, "Noto Sans CJK SC", sans-serif;
    font-weight: bold;
    line-height: 16px;
}

.remark p {
    margin: 0;
}

.remark .title {
    color: #f00;
}

.shifts {
    display: grid;
    grid-template-columns: repeat(8, 155px);
}

.freeze {
    position: absolute;
    left: 646px;
    top: 0;
    bottom: 0;
    width: 1px;
    background-color: #9f9f9f;
}

.handle {
    position: absolute;
    left: 22px;
    top: 696px;
    width: 5px;
    height: 5px;
    background-color: #217346;
}

.vBar {
    display: flex;
    flex-direction: column;
    width: 21px;
    padding: 2px 3px 0 3px;
}

.vBar button, .hBar button {
    width: 15px;
    height: 15px;
    border: 1px solid #ababab;
    background-color: #fff;
}

.vBar .thumb {
    flex: 591;
    border: 1px solid #ababab;
    background-color: #fff;
}

.vBar .track {
    flex: 128;
    background-color: #dadada;
}

/* sheet tabs */
.sheetTabs {
    display: flex;
    height: 28px;
    flex-shrink: 0;
    border-top: 1px solid #9f9f9f;
    padding-right: 22px;
    font-size: 14px;
    color: #444;
    align-items: center;
}

.tabNav {
    display: flex;
    align-self: stretch;
    align-items: center;
    gap: 24px;
    width: 100px;
    padding: 0 0 4px 27px;
}

.tri {
    border: 4px solid transparent;
    border-left: 5px solid #777;
    border-right: 0;
}

.tri.left {
    border-left: 0;
    border-right: 5px solid #777;
}

.tabNav .tri {
    opacity: 0.4;
}

.sheetTabs > button {
    width: 45px;
    height: 23px;
    align-self: flex-start;
    border-left: 1px solid #ababab;
}

.sheetTabs > .two {
    width: 53px;
}

.sheetTabs > .on {
    background-color: #fff;
    color: #217346;
    height: 25px;
    border-right: 1px solid #ababab;
    border-bottom: 2px solid #217346;
}

.sheetTabs > .add {
    margin-left: 18px;
    height: 27px;
    border: 0;
}

.sheetTabs .dots {
    margin-left: auto;
    margin-right: 15px;
}

.hBar {
    display: flex;
    width: 729px;
}

.hBar .thumb {
    flex: 652;
    border: 1px solid #ababab;
    background-color: #fff;
}

.hBar .track {
    flex: 47;
    background-color: #dadada;
}

/* status bar */
.status {
    display: flex;
    align-items: center;
    height: 22px;
    flex-shrink: 0;
    border-top: 1px solid #c6c6c6;
    background-color: #f3f3f3;
    gap: 16px;
    padding: 0 8px;
}

.status > span {
    padding-bottom: 2px;
}

.status .ready {
    margin-right: auto;
}

.views {
    display: flex;
    align-self: stretch;
    margin-left: 3px;
}

.views button {
    width: 38px;
}

.views .on {
    background-color: #c6c6c6;
}

.zoom {
    display: flex;
    align-items: center;
    gap: 4px;
    margin-left: -14px;
}

.zoom button {
    width: 8px;
    font-weight: bold;
    font-size: 14px;
    color: #555;
}

.zoom span {
    margin-left: 8px;
}

.zoom input {
    appearance: none;
    width: 100px;
    height: 12px;
    margin: 0;
    background: linear-gradient(#aaa, #aaa) center / 100% 1px no-repeat;
}

.zoom input::-webkit-slider-thumb {
    appearance: none;
    width: 5px;
    height: 11px;
    background-color: #555;
}

/* taskbar */
.taskbar {
    display: flex;
    justify-content: space-between;
    height: 48px;
    flex-shrink: 0;
    border-top: 1px solid #a9c4b8;
    background-color: #c8ecdd;
    color: #1c1c1c;
}

.taskbar p {
    margin: 0;
    line-height: 16px;
}

.weather, .tray, .apps {
    display: flex;
    align-items: center;
    padding-bottom: 1px;
}

.weather {
    width: 600px;
    gap: 6px;
    padding-left: 18px;
}

.app {
    position: relative;
    width: 44px;
    height: 40px;
    border-radius: 4px;
}

.app.run::after {
    content: "";
    position: absolute;
    left: 19px;
    bottom: 1px;
    width: 6px;
    height: 3px;
    border-radius: 2px;
    background-color: #7b8b84;
}

.app.active {
    background-color: #e3f6ee;
}

.app.active::after {
    left: 14px;
    width: 16px;
    background-color: #0a78d6;
}

.search {
    display: flex;
    align-items: center;
    width: 219px;
    height: 31px;
    margin: 0 3px;
    padding: 0 4px 0 10px;
    border-radius: 16px;
    background-color: #eef9f5;
    border: 1px solid #d5e5de;
}

.search input {
    flex: 1;
    min-width: 0;
    padding: 0 10px;
    font-size: 14px;
}

.search input::placeholder {
    color: #444;
}

.tray {
    width: 600px;
    justify-content: flex-end;
    gap: 17px;
    padding-right: 18px;
    font-size: 15px;
}

.tray .lang {
    margin-right: 5px;
}

.tray .pair {
    display: flex;
    gap: 6px;
    margin: 0 -1px 0 4px;
}

.tray p {
    font-size: 12px;
    text-align: right;
}
```
FILE: script.js
```js
// column letters J..AM follow the nine fixed columns A..I
const letters = [];
for (let i = 0; i < 39; i++) {
    letters.push((i > 25 ? "A" : "") + String.fromCharCode(65 + i % 26));
}

const days = ["Fri", "Sat", "Sun", "Mon", "Tue", "Wed", "Thu"];

const forecast = "72/12 103/39 181/130 209/158 120/47 177/91 142/68 99/41 59/12 80/31 76/33 171134 242/197 158/101 70/11 81/27 97/22 61/9 94/32 217/112 180/119 91/38 47/01 71/25 61/14 22/3 60/36 31/16 50*36 35/27".split(" ");
const forecastWarn = [0, 8, 11, 14, 17, 22, 25];

// name, id, position, phone, remark, OT, AL, new OT, new AL, shifts (* = has a comment)
const staff = {
    6: ["Lilith Zhong 钟晨晨", "000055", "AFOM", "17784914220", "AFOM", "76.5", "4", "76.5", "3",
        "G O O G G G G G O* O* AL G G G A G O G G G G G O O A A A A O* O"],
    8: ["Amy Chen 陈孔燕", "000027", "GSM", "17889722570", "GSM", "62.5", "3.5", "62.5", "2.5",
        "B B B B C C O O A A B B C C O O A B B O O B B B C C AL O* O* O"],
    9: ["Henry Xie 谢沃明", "000171", "GSM", "15812907630", "GSM", "37.5", "2", "37.5", "1",
        "O O A A B B C C O O A A B B C C O O O B B C C C O O AL B B B"],
    10: ["Belinda Wang 王萍", "000108", "GSS", "18212873443", "GSS TF GSM", "17", "4", "17", "2",
        "C C O O A A B B C C O O A A B B B O O C C O* O* O* AL AL B C C C"],
    11: ["Django Peng 彭琨皓", "000245", "GSM", "17623623040", "GSM", "16", "4.5", "16", "3.5",
        "A A C C O O A A B B C C O* O* O* O* C C C O O O A A B B C AL A A"],
    13: ["Lven Ding 丁相斌", "000277", "GSS", "18501377720", "GSS", "16", "1", "16", "0",
        "AL O ML* ML* ML* ML* ML* ML* ML* ML* ML* ML* ML* ML* ML* O A A O O A A A O O C C O O O"],
    14: ["Rose Peng 彭晓露", "000310", "GSA", "17685187531", "GSA", "0", "0", "0", "0",
        "- G G A A A O O C C C O O"],
    15: ["Winni Wang 王晶晶", "000308", "GSA", "16684731209", "GSA", "0", "0", "0", "0",
        "O B B C E C O O O A A A B C O O F F F F O* O* O* A A A A B B B"],
    16: ["Alice Zhu 朱春艳", "000273", "GSA", "19110882240", "GSA", "16", "0", "16", "0",
        "A A A B O* O* A A A F E C O O A B B C C C O O O C C O O A A A"],
    17: ["Ethan Zhao 赵梓淇", "000036", "CON", "15521010536", "CON", "8", "3", "10", "2",
        "C C C O O B B B C C O A A A A A O O A A C C C AL O O F O F O"],
    18: ["Kimi Yuan 袁宇嵘鸣", "000285", "Trainee", "15180859212", "Trainee", "0", "0", "0", "0",
        "F O* O* A A A C C O O* O* B B B B B O B B B F F O* F B B B C O* O"],
    19: ["Lena Tan 谭玲丽", "000279", "Trainee", "19117661732", "Trainee", "0", "0", "0", "0",
        "B B B O B B O B B B B B C O C C C O O O B B B B O* O* O* F C C"]
};

const shiftTimes = ["07003-A (07:00 — 03:30 ),", "14301-B (03:30 — 23:00 ),", "22003-C (11:00 — 07:30 ),", "07007-D (07:00 — 07:00 ),",
    "10003-E (07:00 — 07:00 ),", "11007-F (11:00 — 08:00 ),", "22003-G (08:00 — 06:00 ),", "12008-H (12:00 — 21:00 )"];

const logo = `<div class="logo"><svg width="32" height="32" viewBox="0 0 32 32" fill="none" stroke="#075e45" stroke-linecap="round">
<path d="M10 4c2 0 3 1 2 4-2 7-6 13-4 19" stroke-width="4"/><path d="M24 2c-4 8-7 17-6 27" stroke-width="4"/><path d="M1 19C8 13 18 10 30 9" stroke-width="3"/></svg>
<p>假日酒店<br>Holiday Inn<small class="group1">洲际酒店集团旗下</small><small>贵阳机场</small><small>GUIYANG AIRPORT</small></p></div>`;

function td(cls, text, extra) {
    return `<td class="${cls}" ${extra || ""}>${text}</td>`;
}

function codes(list) {
    return list.split(" ").map(c => {
        if (c == "-") {
            return td("green", "", 'colspan="18"');
        }
        const code = c.replace("*", "");
        return td("code " + code + (c != code ? " note" : ""), code);
    }).join("");
}

function perDay(fn) {
    let out = "";
    for (let i = 0; i < 30; i++) {
        out += fn(i, i % 7 == 1 || i % 7 == 2 ? " weekend" : "");
    }
    return out;
}

function rowCells(n) {
    if (n == 1) {
        return td("banner", logo + '<div class="first">ROOMS-FO Monthly Duty Roster- March 2025</div><div>房务部-前厅月度排班表(2025-11月)</div>', 'colspan="39"');
    }
    if (n == 2) {
        return td("big1", "Period", 'colspan="5"') + td("big1", "Up.", 'colspan="2"') + td("big1 red", "New<br>Update", 'colspan="2"')
            + td("week w1", "1st Week 第一周", 'colspan="3"') + td("week w2", "2nd Week 第二周", 'colspan="7"')
            + td("week w3", "3rd Week 第三周", 'colspan="7"') + td("week w4", "4th Week 第四周", 'colspan="7"')
            + td("week w5", "5th Week 第五周", 'colspan="6"');
    }
    if (n == 3) {
        const heads = ["Name of Staff<br>员工姓名", "Employee ID<br>员工号", "Position<br>职位", "Contact No.<br>联系方式", "Remark<br>备注"];
        return heads.map(h => td("head", h, 'rowspan="2"')).join("")
            + td("head frozen", "OT<br>小时", 'rowspan="3"') + td("head frozen", "AL<br>天数", 'rowspan="3"')
            + td("red frozen", "OT", 'rowspan="3"') + td("red frozen", "AL", 'rowspan="3"')
            + perDay((i, w) => td("day" + w, i ? days[i % 7] : ""));
    }
    if (n == 4) {
        return perDay((i, w) => td("date" + w, i < 10 ? (21 + i) + "-Nov" : (i - 9) + "-Dec"));
    }
    if (n == 5) {
        return td("head", "KWEAP-HI Rooms Forecast", 'colspan="4"') + td("", "")
            + perDay(i => td("fore" + (forecastWarn.includes(i) ? " warn" : ""), forecast[i]));
    }
    if (n == 7 || n == 12 || n == 20) {
        return td("section", n == 7 ? "GSM (KWEAP)" : n == 12 ? "Front Desk (KWEAP）" : "", 'colspan="39"');
    }
    if (n == 21) {
        return td("remark", '<p class="title">Shift Remark &nbsp;（ KWEAP):</p><p class="shifts">'
            + shiftTimes.map(s => `<span>${s}</span>`).join("") + "</p>", 'colspan="39"');
    }
    const s = staff[n];
    return td("name", s[0]) + td("warn", s[1]) + td("", s[2]) + td("", s[3]) + td("red", s[4])
        + td("num", s[5]) + td("num", s[6]) + td("red", s[7]) + td("red", s[8]) + codes(s[9]);
}

document.getElementById("cols").innerHTML = ["cHead", "cA", "cB", "cC", "cD", "cE"].map(c => `<col class="${c}">`).join("") + "<col>".repeat(34);
document.getElementById("letters").innerHTML += letters.map(l => `<th>${l}</th>`).join("");

let rows = "";
for (let n = 1; n <= 21; n++) {
    rows += `<tr class="r${n}"><th>${n < 21 ? n : ""}</th>${rowCells(n)}</tr>`;
}
document.getElementById("cells").innerHTML = rows;
```
